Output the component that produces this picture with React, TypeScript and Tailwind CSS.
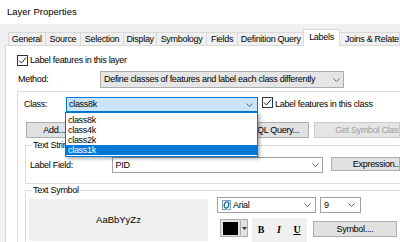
import React from "react";

const Chevron = () => (
  <svg width="7" height="4" viewBox="0 0 7 4" className="shrink-0">
    <path d="M0.5 0.5 L3.5 3.5 L6.5 0.5" fill="none" stroke="#606060" strokeWidth="1" />
  </svg>
);

const Check = () => (
  <div className="w-[11px] h-[11px] border border-[#333333] bg-white flex items-center justify-center shrink-0">
    <svg width="9" height="9" viewBox="0 0 9 9">
      <path d="M1 4.5 L3.5 7 L8 1.5" fill="none" stroke="#222222" strokeWidth="1" />
    </svg>
  </div>
);

const Tab = ({ label, w, last = false }: { label: string; w: string; last?: boolean }) => (
  <div
    className={`${w} h-[13px] border-t border-l border-[#d9d9d9] bg-[#f0f0f0] flex items-center justify-center whitespace-nowrap overflow-hidden ${last ? "border-r" : ""}`}
  >
    {label}
  </div>
);

export default function App() {
  return (
    <div className="w-[400px] h-[242px] overflow-hidden bg-[#f0f0f0] relative text-[9px] tracking-[-0.3px] text-black font-['Liberation_Sans',Arial,sans-serif] leading-none flex flex-col">
      {/* title */}
      <div className="h-[24px] shrink-0 bg-white flex items-center pl-[7px] text-[9.5px] tracking-normal">Layer Properties</div>

      {/* tabs */}
      <div className="pt-[5px] h-[21px] shrink-0 flex items-end pl-[8px] whitespace-nowrap">
        <Tab label="General" w="w-[38px]" />
        <Tab label="Source" w="w-[37px]" />
        <Tab label="Selection" w="w-[44px]" />
        <Tab label="Display" w="w-[35px]" />
        <Tab label="Symbology" w="w-[51px]" />
        <Tab label="Fields" w="w-[33px]" />
        <Tab label="Definition Query" w="w-[68px]" />
        <div className="w-[37px] shrink-0 h-[17px] -mb-px relative z-10 bg-white border-t border-l border-r border-[#d9d9d9] flex items-center justify-center pb-[2px]">
          Labels
        </div>
        <div className="w-[60px] shrink-0 h-[13px] border-t border-r border-[#d9d9d9] bg-[#f0f0f0] flex items-center pl-[5px] overflow-hidden">
          Joins &amp; Relates
        </div>
      </div>

      {/* panel */}
      <div className="ml-[5px] flex-1 border-t border-l border-[#d9d9d9] bg-white flex flex-col whitespace-nowrap">
        <div className="mt-[9px] ml-[11px] flex items-center gap-[2px] h-[11px]">
          <Check />
          <span>Label features in this layer</span>
        </div>

        <div className="mt-[5px] ml-[12px] flex items-center">
          <div className="w-[82px]">Method:</div>
          <div className="w-[244px] h-[17px] bg-[#e5e5e5] border border-[#adadad] flex items-center justify-between pl-[3px] pr-[3px]">
            <span>Define classes of features and label each class differently</span>
            <Chevron />
          </div>
        </div>

        {/* class group */}
        <div className="mt-[3px] ml-[11px] flex-1 border-t border-l border-[#dcdcdc] flex flex-col">
          <div className="mt-[5px] flex items-start">
            <div className="ml-[6px] w-[42px] h-[15px] flex items-center">Class:</div>
            <div className="w-[192px] h-[15px] bg-[#cce4f7] border border-[#0078d7] flex items-center justify-between pl-[2px] pr-[4px]">
              <span>class8k</span>
              <Chevron />
            </div>
            <div className="ml-[4px]">
              <Check />
            </div>
            <div className="ml-[2px] h-[15px] flex items-center">Label features in this class</div>
          </div>

          <div className="mt-[10px] ml-[8px] flex">
            <div className="w-[60px] h-[16px] bg-[#e1e1e1] border border-[#adadad] flex items-center justify-center">Add...</div>
            <div className="ml-[151px] w-[80px] h-[16px] bg-[#e1e1e1] border border-[#adadad] flex items-center justify-end pr-[9px]">SQL Query...</div>
            <div className="ml-[5px] w-[90px] h-[16px] bg-[#e5e5e5] border border-[#cccccc] text-[#a0a0a0] flex items-center pl-[20px] overflow-hidden">Get Symbol Classes</div>
          </div>

          {/* Text String */}
          <div className="mt-[7px] ml-[7px] h-[39px] border-t border-l border-b border-[#dcdcdc] relative flex flex-col">
            <div className="absolute -top-[5px] left-[6px] bg-white px-[1px]">Text String</div>
            <div className="mt-[11px] ml-[4px] flex items-start">
              <div className="w-[83px] h-[16px] flex items-center">Label Field:</div>
              <div className="w-[215px] h-[16px] bg-white border border-[#a0a0a0] flex items-center justify-between pl-[3px] pr-[3px]">
                <span>PID</span>
                <Chevron />
              </div>
              <div className="ml-[8px] w-[70px] h-[14px] bg-[#e1e1e1] border border-[#adadad] flex items-center pl-[21px] overflow-hidden">Expression...</div>
            </div>
          </div>

          {/* Text Symbol */}
          <div className="mt-[6px] ml-[7px] flex-1 border-t border-l border-[#dcdcdc] relative flex">
            <div className="absolute -top-[5px] left-[6px] bg-white px-[1px]">Text Symbol</div>
            <div className="mt-[8px] ml-[3px] w-[179px] h-[42px] bg-[#f0f0f0] flex items-center justify-center text-[9.5px] tracking-normal">AaBbYyZz</div>
            <div className="ml-[9px] mt-[6px] flex flex-col">
              <div className="flex">
                <div className="w-[99px] h-[16px] bg-white border border-[#a0a0a0] flex items-center justify-between pl-[4px] pr-[4px]">
                  <div className="flex items-center gap-[2px]">
                    <svg width="9" height="10" viewBox="0 0 9 10">
                      <rect x="0.5" y="0.5" width="8" height="9" fill="#ffffff" stroke="#7aa6c8" />
                      <ellipse cx="4.5" cy="5" rx="2.2" ry="3.2" transform="rotate(18 4.5 5)" fill="none" stroke="#1b6d8a" strokeWidth="1.3" />
                    </svg>
                    <span>Arial</span>
                  </div>
                  <Chevron />
                </div>
                <div className="ml-[4px] w-[41px] h-[16px] bg-white border border-[#a0a0a0] flex items-center justify-between pl-[3px] pr-[5px]">
                  <span>9</span>
                  <Chevron />
                </div>
              </div>
              <div className="mt-[6px] flex items-start">
                <div className="ml-[3px] w-[28px] h-[18px] bg-[#e1e1e1] border border-[#adadad] flex items-center">
                  <div className="ml-[2px] w-[15px] h-[13px] bg-black" />
                  <div className="ml-[2px] w-px h-[14px] bg-[#adadad]" />
                  <svg width="5" height="3" viewBox="0 0 5 3" className="ml-[1px]">
                    <path d="M0 0 H5 L2.5 3 Z" fill="#333333" />
                  </svg>
                </div>
                <div className="ml-[4px] -mt-px w-[55px] h-[24px] bg-[#f0f0f0] flex items-center font-['Liberation_Serif',serif] font-bold text-[10px] tracking-normal">
                  <div className="w-[18px] text-center">B</div>
                  <div className="w-[18px] text-center italic">I</div>
                  <div className="w-[18px] text-center underline">U</div>
                </div>
                <div className="ml-[6px] mt-[2px] w-[84px] h-[16px] bg-[#e1e1e1] border border-[#adadad] flex items-center justify-center">Symbol....</div>
              </div>
            </div>
          </div>
        </div>
      </div>

      {/* dropdown list overlay */}
      <div className="absolute left-[65px] top-[112px] w-[193px] h-[45px] border border-[#0078d7] bg-white pt-[2px] shadow-[2px_2px_3px_rgba(0,0,0,0.3)] z-20">
        <div className="h-[10px] flex items-center pl-[2px]">class8k</div>
        <div className="h-[10px] flex items-center pl-[2px]">class4k</div>
        <div className="h-[10px] flex items-center pl-[2px]">class2k</div>
        <div className="h-[10px] flex items-center pl-[2px] bg-[#0078d7] text-white">class1k</div>
      </div>
    </div>
  );
}
